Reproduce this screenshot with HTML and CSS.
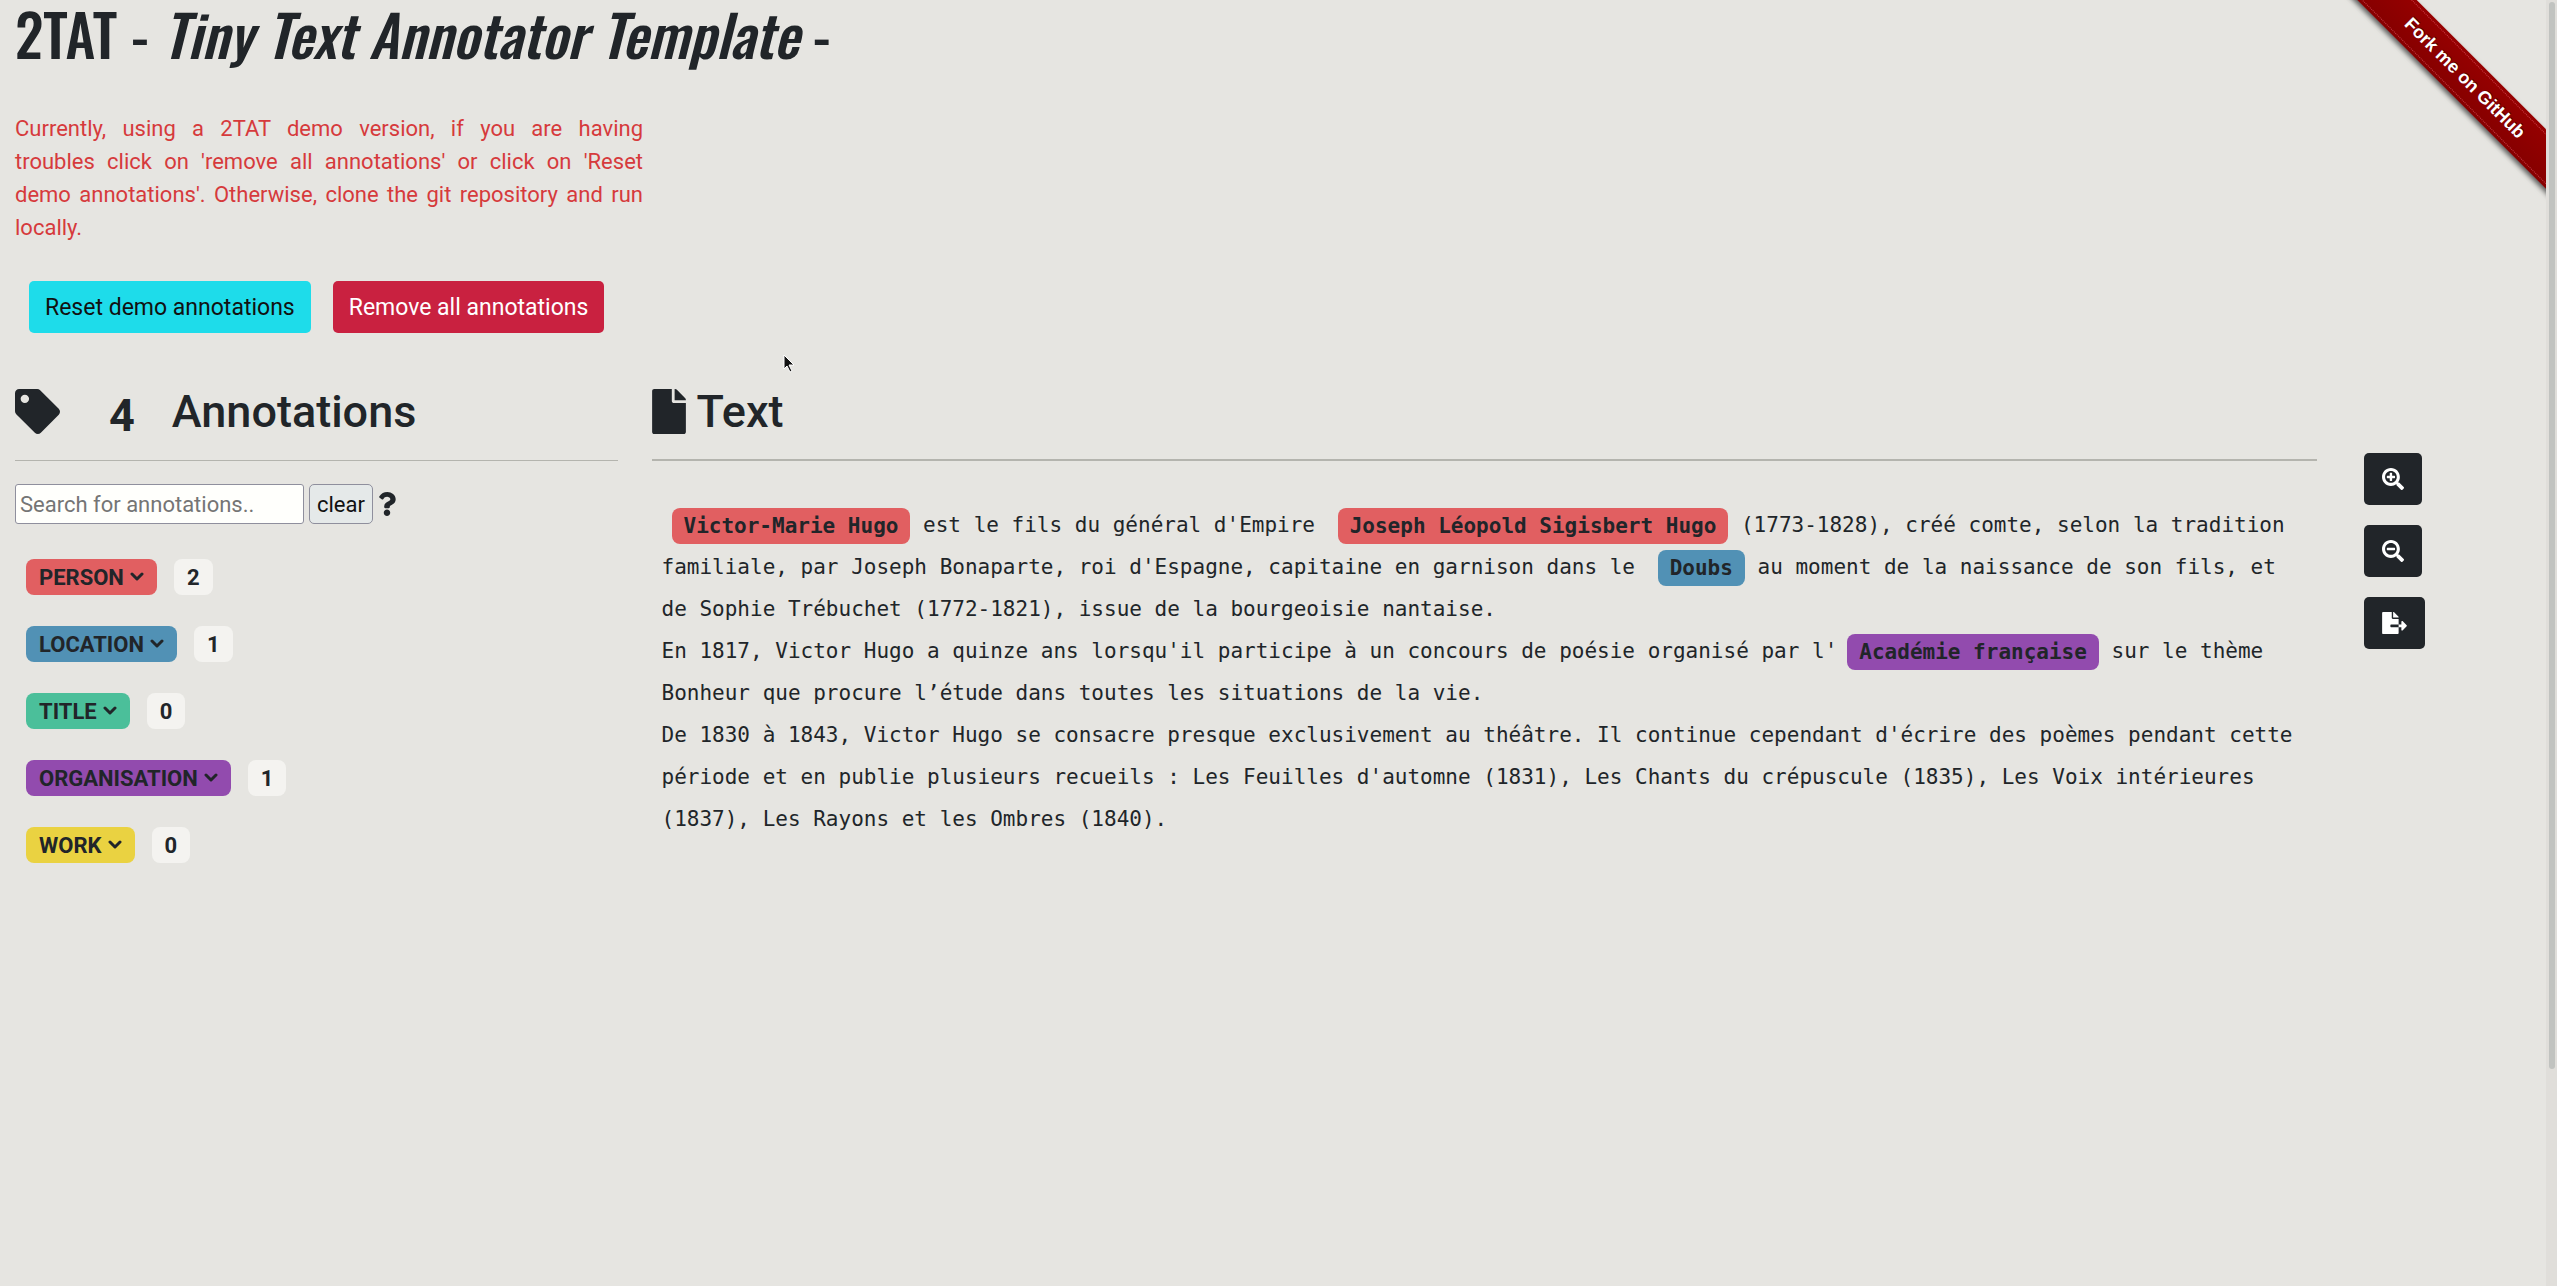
FILE: index.html
```html
<!DOCTYPE html>
<html lang="en">
<head>
<meta charset="utf-8">
<title>2TAT - Tiny Text Annotator Template -</title>
<link rel="stylesheet" href="styles.css">
</head>
<body>
<div class="page">
  <header class="intro">
    <h1 class="title">2TAT - <em>Tiny Text Annotator Template</em> -</h1>
    <p class="notice">Currently, using a 2TAT demo version, if you are having troubles&nbsp;click on 'remove all annotations' or click on 'Reset demo&nbsp;annotations'. Otherwise, clone the git repository and run locally.</p>
    <div class="demo-actions">
      <button type="button" class="btn btn-info">Reset demo annotations</button>
      <button type="button" class="btn btn-danger">Remove all annotations</button>
    </div>
  </header>
  <main class="columns">
    <section class="col col-side">
      <h2 class="heading">
        <svg class="icon-tag" viewBox="0 0 512 512"><path d="M0 252.118V48C0 21.49 21.49 0 48 0h204.118a48 48 0 0 1 33.941 14.059l211.882 211.882c18.745 18.745 18.745 49.137 0 67.882L293.823 497.941c-18.745 18.745-49.137 18.745-67.882 0L14.059 286.059A48 48 0 0 1 0 252.118zM112 64c-26.51 0-48 21.49-48 48s21.49 48 48 48 48-21.49 48-48-21.49-48-48-48z"/></svg>
        <span class="total">4</span>
        <span>Annotations</span>
      </h2>
      <hr class="rule">
      <form class="search">
        <input class="search-box" type="text" placeholder="Search for annotations.." aria-label="Search for annotations">
        <button type="button" class="clear">clear</button>
        <svg class="icon-help" viewBox="0 0 384 512"><path d="M202.021 0C122.202 0 70.503 32.703 29.914 91.026c-7.363 10.58-5.093 25.086 5.178 32.874l43.138 32.709c10.373 7.865 25.132 6.026 33.253-4.148 25.049-31.381 43.63-49.449 82.757-49.449 30.764 0 68.816 19.799 68.816 49.631 0 22.552-18.617 34.134-48.993 51.164-35.423 19.86-82.299 44.576-82.299 106.405V320c0 13.255 10.745 24 24 24h72.471c13.255 0 24-10.745 24-24v-5.773c0-42.86 125.268-44.645 125.268-160.627C377.504 66.256 286.902 0 202.021 0zM192 373.459c-38.196 0-69.271 31.075-69.271 69.271 0 38.195 31.075 69.27 69.271 69.27s69.271-31.075 69.271-69.271-31.075-69.27-69.271-69.27z"/></svg>
      </form>
      <ul class="categories">
        <li class="category"><button type="button" class="badge person">PERSON <svg class="chevron" viewBox="0 0 14 10"><path d="M2 2l5 5 5-5"/></svg></button><span class="badge count">2</span></li>
        <li class="category"><button type="button" class="badge location">LOCATION <svg class="chevron" viewBox="0 0 14 10"><path d="M2 2l5 5 5-5"/></svg></button><span class="badge count">1</span></li>
        <li class="category"><button type="button" class="badge work-title">TITLE <svg class="chevron" viewBox="0 0 14 10"><path d="M2 2l5 5 5-5"/></svg></button><span class="badge count">0</span></li>
        <li class="category"><button type="button" class="badge organisation">ORGANISATION <svg class="chevron" viewBox="0 0 14 10"><path d="M2 2l5 5 5-5"/></svg></button><span class="badge count">1</span></li>
        <li class="category"><button type="button" class="badge work">WORK <svg class="chevron" viewBox="0 0 14 10"><path d="M2 2l5 5 5-5"/></svg></button><span class="badge count">0</span></li>
      </ul>
    </section>
    <section class="col">
      <h2 class="heading heading-text">
        <svg class="icon-file" viewBox="0 0 384 512"><path d="M224 136V0H24C10.7 0 0 10.7 0 24v464c0 13.3 10.7 24 24 24h336c13.3 0 24-10.7 24-24V160H248c-13.2 0-24-10.8-24-24zm160-14.1v6.1H256V0h6.1c6.4 0 12.5 2.5 17 7l97.9 98c4.5 4.5 7 10.6 7 16.9z"/></svg>
        <span>Text</span>
      </h2>
      <hr class="rule rule-thick">
      <div class="document" lang="fr">
        <p><mark class="mark person">Victor-Marie Hugo</mark> est le fils du général d'Empire <mark class="mark person">Joseph Léopold Sigisbert Hugo</mark> (1773-1828), créé comte, selon la tradition familiale, par Joseph Bonaparte, roi d'Espagne, capitaine en garnison dans le <mark class="mark location">Doubs</mark> au moment de la naissance de son fils, et de Sophie Trébuchet (1772-1821), issue de la bourgeoisie nantaise.</p>
        <p>En 1817, Victor Hugo a quinze ans lorsqu'il participe à un concours de poésie organisé par l'<mark class="mark organisation">Académie française</mark> sur le thème Bonheur que procure l’étude dans toutes les situations de la vie.</p>
        <p>De 1830 à 1843, Victor Hugo se consacre presque exclusivement au théâtre. Il continue cependant d'écrire des poèmes pendant cette période et en publie plusieurs recueils : Les Feuilles d'automne (1831), Les Chants du crépuscule (1835), Les Voix intérieures (1837), Les Rayons et les Ombres (1840).</p>
      </div>
    </section>
    <aside class="tools">
      <button type="button" class="tool" aria-label="Zoom in"><svg class="icon-tool" viewBox="0 0 512 512"><path d="M304 192v32c0 6.600-5.400 12-12 12h-56v56c0 6.600-5.400 12-12 12h-32c-6.600 0-12-5.400-12-12v-56h-56c-6.600 0-12-5.400-12-12v-32c0-6.600 5.400-12 12-12h56v-56c0-6.600 5.400-12 12-12h32c6.600 0 12 5.400 12 12v56h56c6.600 0 12 5.400 12 12zm201 284.700L476.700 505c-9.400 9.400-24.600 9.400-33.900 0L343 405.300c-4.500-4.500-7-10.600-7-17V372c-35.300 27.600-79.700 44-128 44C93.100 416 0 322.900 0 208S93.100 0 208 0s208 93.100 208 208c0 48.300-16.400 92.700-44 128h16.300c6.400 0 12.500 2.500 17 7l99.700 99.700c9.300 9.400 9.300 24.600 0 34zM344 208c0-75.200-60.800-136-136-136S72 132.800 72 208s60.800 136 136 136 136-60.800 136-136z"/></svg></button>
      <button type="button" class="tool" aria-label="Zoom out"><svg class="icon-tool" viewBox="0 0 512 512"><path d="M304 192v32c0 6.600-5.400 12-12 12H124c-6.600 0-12-5.400-12-12v-32c0-6.600 5.400-12 12-12h168c6.600 0 12 5.400 12 12zm201 284.700L476.700 505c-9.400 9.400-24.600 9.400-33.900 0L343 405.300c-4.500-4.500-7-10.600-7-17V372c-35.300 27.600-79.700 44-128 44C93.100 416 0 322.900 0 208S93.100 0 208 0s208 93.100 208 208c0 48.300-16.400 92.700-44 128h16.300c6.400 0 12.500 2.500 17 7l99.700 99.700c9.300 9.400 9.300 24.600 0 34zM344 208c0-75.200-60.800-136-136-136S72 132.800 72 208s60.800 136 136 136 136-60.800 136-136z"/></svg></button>
      <button type="button" class="tool" aria-label="Export"><svg class="icon-tool icon-export" viewBox="0 0 576 512"><path d="M384 121.900c0-6.300-2.500-12.400-7-16.900L279.100 7c-4.500-4.500-10.600-7-17-7H256v128h128zM571 308l-95.700-96.400c-10.100-10.100-27.400-3-27.400 11.300V288h-64v64h64v65.200c0 14.300 17.300 21.400 27.400 11.300L571 332c6.600-6.600 6.600-17.400 0-24zm-379 28v-32c0-8.800 7.200-16 16-16h176V160H248c-13.200 0-24-10.800-24-24V0H24C10.700 0 0 10.700 0 24v464c0 13.300 10.700 24 24 24h336c13.300 0 24-10.700 24-24V352H208c-8.800 0-16-7.200-16-16z"/></svg></button>
    </aside>
  </main>
  <div class="ribbon-corner"><a class="ribbon" href="#"><span class="ribbon-text">Fork me on GitHub</span></a></div>
</div>
<div class="scrollbar"><div class="thumb"></div></div>
<svg class="pointer" viewBox="0 0 12 19"><path d="M1 1v14l3-3 3 6 2-1-3-6h5z"/></svg>
</body>
</html>
```
FILE: styles.css
```css
* { box-sizing: border-box; }

body {
  margin: 0;
  min-height: 100vh;
  display: flex;
  background: #e6e5e1;
  color: #212529;
  font-family: Roboto, "Liberation Sans", sans-serif;
  font-size: 22px;
  line-height: 33px;
}

button, input { font: inherit; }

.page {
  flex: 1;
  position: relative;
  min-width: 0;
}

/* Intro */
.intro { padding: 0 15px; }

.title {
  margin: 0;
  font-family: Oswald, "Roboto Condensed", "Liberation Sans Narrow", sans-serif;
  font-size: 57px;
  font-weight: 500;
  line-height: 67px;
}

.notice {
  max-width: 628px;
  margin: 45px 0 37px;
  color: #d63a3c;
  text-align: justify;
}

.demo-actions {
  display: flex;
  gap: 22px;
  padding: 0 14px;
}

.btn {
  height: 52px;
  padding: 0 16px;
  border: 0;
  border-radius: 5px;
  font-size: 23px;
}

.btn-info { background: #1edcea; color: #111; }
.btn-danger { background: #c92140; color: #fff; }

/* Columns */
.columns {
  display: grid;
  grid-template-columns: 3fr 8fr 1fr;
  margin-top: 50px;
}

.col { padding: 0 17px 0 15px; }
.col-side { padding-right: 19px; }

.heading {
  display: flex;
  align-items: center;
  height: 56px;
  margin: 0;
  font-size: 45px;
  font-weight: 500;
}

.heading-text { gap: 11px; }

.total {
  margin: 8px 37px 0 49px;
  font-weight: 700;
}

.icon-tag { width: 45px; height: 45px; fill: currentColor; }
.icon-file { width: 34px; height: 45px; fill: currentColor; }

.rule {
  height: 1px;
  margin: 21px 0 23px;
  border: 0;
  background: #b4b4ae;
}

.rule-thick { height: 2px; margin: 20px 0 43px; }

.search {
  display: flex;
  align-items: center;
  gap: 5px;
}

.search-box {
  width: 289px;
  height: 40px;
  padding: 0 4px;
  border: 1px solid #8f8f9d;
  border-radius: 3px;
  background: #fffffc;
}

.search-box::placeholder { color: #757575; opacity: 1; }

.clear {
  height: 40px;
  padding: 0 7px;
  border: 1px solid #8f8f9d;
  border-radius: 5px;
  background: #e5e9e9;
  color: #111;
}

.icon-help { width: 18px; height: 24px; fill: currentColor; }

.categories {
  display: grid;
  gap: 31px;
  margin: 35px 0 0;
  padding: 0 11px;
  list-style: none;
}

.category { display: flex; gap: 17px; }

.badge {
  display: flex;
  align-items: center;
  gap: 6px;
  height: 36px;
  padding: 0 13px;
  border: 0;
  border-radius: 8px;
  color: #212529;
  font-weight: 700;
}

.count { background: #f4f3f0; }

.chevron {
  width: 14px;
  height: 10px;
  fill: none;
  stroke: currentColor;
  stroke-width: 3;
  stroke-linecap: round;
  stroke-linejoin: round;
}

.person { background: #e15f61; }
.location { background: #5191b5; }
.work-title { background: #4bbf9a; }
.organisation { background: #924bae; }
.work { background: #ead241; }

/* Annotated text */
.document {
  padding: 0 10px;
  font-family: "DejaVu Sans Mono", "Liberation Mono", monospace;
  font-size: 21px;
  line-height: 42px;
}

.document p { margin: 0; }

.mark {
  display: inline-block;
  margin-left: 10px;
  padding: 0 12px;
  border-radius: 8px;
  color: #212529;
  font-weight: 700;
  line-height: 36px;
  vertical-align: middle;
}

/* Tool buttons */
.tools {
  display: flex;
  flex-direction: column;
  align-items: flex-start;
  gap: 20px;
  padding: 70px 30px 0;
}

.tool {
  display: flex;
  align-items: center;
  height: 52px;
  padding: 0 18px;
  border: 0;
  border-radius: 5px;
  background: #212529;
}

.icon-tool { width: 22px; height: 22px; fill: #fff; }
.icon-export { width: 25px; }

/* Corner ribbon */
.ribbon-corner {
  position: absolute;
  top: 0;
  right: 0;
  width: 210px;
  height: 210px;
  overflow: hidden;
}

.ribbon {
  position: absolute;
  top: 57px;
  right: -69px;
  width: 300px;
  padding: 3px 0;
  background: linear-gradient(#960000, #860000);
  box-shadow: 0 3px 5px rgba(0, 0, 0, 0.6);
  color: #fff;
  font-family: "Liberation Sans", sans-serif;
  font-size: 18px;
  font-weight: 700;
  line-height: 34px;
  text-align: center;
  text-decoration: none;
  text-shadow: 0 -1px rgba(0, 0, 0, 0.5);
  transform: rotate(45deg);
}

.ribbon-text {
  display: block;
  border: 1px dotted rgba(255, 120, 140, 0.5);
  border-width: 1px 0;
}

/* Scrollbar */
.scrollbar {
  width: 11px;
  padding: 2px 2px 0 3px;
  background: #e0deda;
}

.thumb {
  height: 83vh;
  border-radius: 3px;
  background: #c1c3c0;
}

/* Mouse pointer */
.pointer {
  position: absolute;
  left: 783px;
  top: 354px;
  width: 12px;
  height: 19px;
  fill: #111;
  stroke: #fff;
  stroke-width: 1;
}
```
